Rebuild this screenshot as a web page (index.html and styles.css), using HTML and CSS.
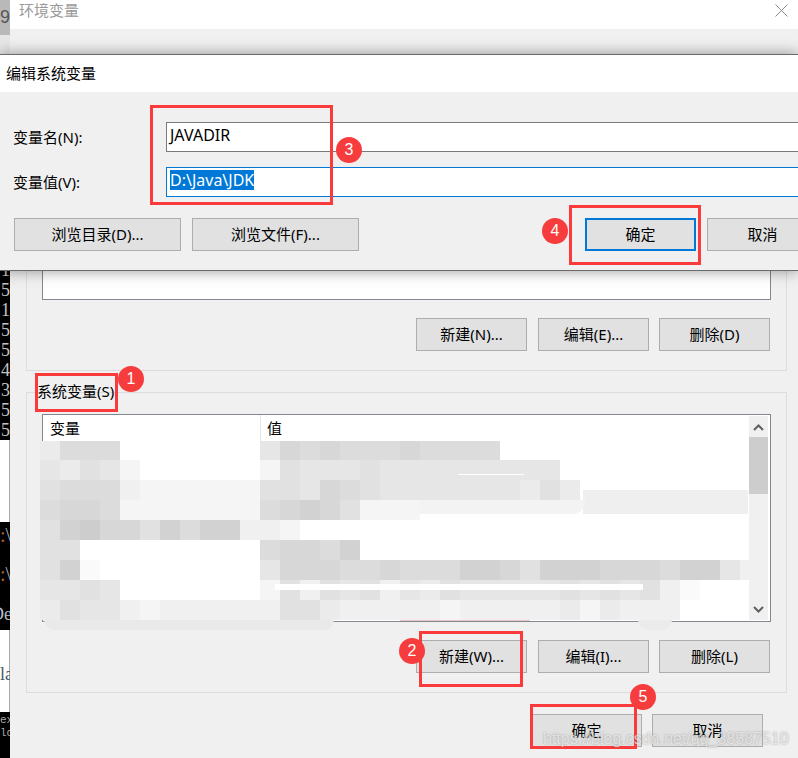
FILE: index.html
```html
<!DOCTYPE html>
<html lang="zh-CN">
<head>
  <meta charset="UTF-8" />
  <title>环境变量</title>
  <link rel="stylesheet" href="styles.css">
</head>
<body>
  <div class="desktop">
    <div class="console">
      <div class="con-top">9</div>
      <div class="con-gap"></div>
      <div class="con-digits">1<br>5<br>1<br>5<br>5<br>4<br>3<br>5<br>5</div>
      <div class="con-white"></div>
      <div class="con-paths">
        <div class="con-lines"><span class="orange">:</span>\<br><span class="orange">:</span>\<br><span class="cut">De</span></div>
      </div>
      <div class="con-la">la</div>
      <div class="con-small">ex<br>ld</div>
    </div>

    <div class="env-window">
      <div class="env-title">
        环境变量
        <svg class="close-icon" width="13" height="13" viewBox="0 0 13 13"><path d="M0.5 0.5L12.5 12.5M12.5 0.5L0.5 12.5" stroke="#8c8c8c" stroke-width="1" fill="none"/></svg>
      </div>
      <div class="env-body">
        <div class="group">
          <div class="list list-user"></div>
          <div class="btn-row">
            <div class="btn">新建(N)...</div>
            <div class="btn">编辑(E)...</div>
            <div class="btn">删除(D)</div>
          </div>
        </div>

        <div class="group group-sys">
          <span class="group-label">系统变量(S)</span>
          <div class="list list-sys">
            <div class="list-head">
              <div class="col-name">变量</div>
              <div class="col-value">值</div>
            </div>
            <div class="mosaic" id="mosaic">
              <div class="patch band-a"></div>
              <div class="patch band-b"></div>
              <div class="patch streak"></div>
              <div class="patch hairline"></div>
              <div class="patch smear"></div>
              <div class="patch smudge"></div>
              <div class="patch smudge-right"></div>
            </div>
            <div class="scrollbar">
              <svg class="arrow" width="19" height="21" viewBox="0 0 19 21"><path d="M5 14L9.5 9.5L14 14" stroke="#606060" stroke-width="2" fill="none"/></svg>
              <div class="thumb"></div>
              <div class="track"></div>
              <svg class="arrow" width="19" height="21" viewBox="0 0 19 21"><path d="M5 8L9.5 12.5L14 8" stroke="#606060" stroke-width="2" fill="none"/></svg>
            </div>
          </div>
          <div class="btn-row">
            <div class="btn">新建(W)...</div>
            <div class="btn">编辑(I)...</div>
            <div class="btn">删除(L)</div>
          </div>
        </div>

        <div class="env-actions">
          <div class="btn">确定</div>
          <div class="btn">取消</div>
        </div>
      </div>
    </div>

    <div class="edit-dialog">
      <div class="dialog-title">编辑系统变量</div>
      <div class="dialog-body">
        <div class="field">
          <label class="field-label">变量名(N):</label>
          <div class="field-input">JAVADIR</div>
        </div>
        <div class="field">
          <label class="field-label">变量值(V):</label>
          <div class="field-input is-focus"><span class="selected">D:\Java\JDK</span></div>
        </div>
        <div class="dialog-actions">
          <div class="btn btn-wide">浏览目录(D)...</div>
          <div class="btn btn-wide">浏览文件(F)...</div>
          <div class="btn is-default">确定</div>
          <div class="btn btn-cut">取消</div>
        </div>
      </div>
    </div>

    <div class="box box-1"></div>
    <div class="box box-2"></div>
    <div class="box box-3"></div>
    <div class="box box-4"></div>
    <div class="box box-5"></div>
    <div class="badge badge-1">1</div>
    <div class="badge badge-2">2</div>
    <div class="badge badge-3">3</div>
    <div class="badge badge-4">4</div>
    <div class="badge badge-5">5</div>

    <div class="watermark">https://blog.csdn.net/qq_38587510</div>
  </div>

  <script src="mosaic.js"></script>
</body>
</html>
```

FILE: styles.css
```css
body {
  margin: 0;
  font-family: "Noto Sans", "Noto Sans CJK SC", sans-serif;
  font-size: 15px;
  color: #000;
  background-color: #f0f0f0;
}

.desktop {
  position: relative;
  display: flex;
  width: 798px;
  height: 758px;
  overflow: hidden;
}

/* console window peeking out on the left */
.console {
  width: 10px;
  flex: none;
  overflow: hidden;
  font-family: "Liberation Serif", serif;
  white-space: nowrap;
}

.con-top {
  height: 35px;
  margin-left: -2px;
  padding-left: 2px;
  background-color: #b9b9b9;
  color: #555;
  font-family: "Liberation Sans", sans-serif;
  font-size: 18px;
  line-height: 34px;
}

.con-gap {
  height: 225px;
  background-color: #e6e6e6;
}

.con-digits {
  height: 180px;
  padding-left: 1px;
  background-color: #000;
  color: #c4c4c4;
  font-size: 18px;
  line-height: 20px;
}

.con-white {
  box-sizing: border-box;
  height: 82px;
  border-right: 1px solid #a9a9a9;
  background-color: #fff;
}

.con-paths {
  height: 108px;
  background-color: #000;
  color: #9db4ca;
  font-size: 20px;
  line-height: 39px;
  overflow: hidden;
}

.con-lines {
  margin-top: -6px;
}

.cut {
  display: inline-block;
  margin-left: -9px;
  font-size: 18px;
  color: #b4bcc4;
}

.orange {
  color: #b5601e;
}

.con-la {
  box-sizing: border-box;
  height: 82px;
  border-right: 1px solid #a9a9a9;
  background-color: #fff;
  color: #4a5a6a;
  font-size: 18px;
  line-height: 88px;
}

.con-small {
  height: 46px;
  background-color: #000;
  color: #a8a8a8;
  font-family: "Liberation Mono", monospace;
  font-size: 11px;
  line-height: 13px;
  padding-top: 2px;
}

/* environment variables window */
.env-window {
  flex: 1;
  min-width: 0;
  background-color: #f0f0f0;
}

.env-title {
  position: relative;
  height: 29px;
  padding-left: 9px;
  background-color: #fff;
  color: #9a9a9a;
  line-height: 20px;
}

.close-icon {
  position: absolute;
  right: 10px;
  top: 4px;
}

.env-body {
  padding: 31px 11px 0 16px;
}

.group {
  position: relative;
  padding: 19px 15px 19px;
  border: 1px solid #dcdcdc;
}

.group-sys {
  margin-top: 21px;
  padding-top: 21px;
}

.group-label {
  position: absolute;
  left: 10px;
  top: -12px;
  line-height: 20px;
}

.list {
  position: relative;
  box-sizing: border-box;
  display: flex;
  background-color: #fff;
  border: 1px solid #828790;
}

.list-user {
  height: 220px;
}

.list-sys {
  height: 208px;
}

.list-head {
  display: flex;
  flex: 1;
  height: 26px;
  line-height: 27px;
}

.col-name {
  width: 210px;
  padding-left: 7px;
  border-right: 1px solid #e5e5e5;
}

.col-value {
  padding-left: 6px;
}

.scrollbar {
  position: relative;
  z-index: 1;
  display: flex;
  flex-direction: column;
  width: 19px;
  margin: 1px 2px 1px 0;
  background-color: #f0f0f0;
}

.arrow {
  display: block;
  flex: none;
}

.thumb {
  height: 57px;
  background-color: #cdcdcd;
}

.track {
  flex: 1;
}

/* blurred-out table rows */
.mosaic {
  position: absolute;
  left: -3px;
  top: 26px;
  display: grid;
  grid-template-columns: repeat(36, 20px);
  grid-template-rows: 19px repeat(8, 20px);
}

.patch {
  position: absolute;
}

.band-a {
  left: 543px;
  top: 49px;
  width: 165px;
  height: 24px;
  background-color: #efefef;
}

.band-b {
  left: 380px;
  top: 59px;
  width: 165px;
  height: 14px;
  background-color: #f3f3f3;
  border-bottom-right-radius: 12px;
}

.streak {
  left: 235px;
  top: 143px;
  width: 368px;
  height: 6px;
  background-color: #fff;
}

.hairline {
  left: 418px;
  top: 33px;
  width: 66px;
  height: 1px;
  background-color: #fff;
}

.smear {
  left: 360px;
  top: 179px;
  width: 130px;
  height: 1px;
  background-color: #ecc9c9;
}

.smudge {
  left: 4px;
  top: 179px;
  width: 290px;
  height: 10px;
  background-color: #e9e9e9;
  border-radius: 0 0 40px 40px;
}

.smudge-right {
  left: 598px;
  top: 179px;
  width: 34px;
  height: 10px;
  background-color: #ebebeb;
  border-radius: 0 0 20px 20px;
}

.btn-row {
  display: flex;
  justify-content: flex-end;
  gap: 11px;
  margin-top: 18px;
  padding-right: 1px;
}

.btn-row .btn:last-child {
  margin-left: -1px;
}

.env-actions {
  display: flex;
  justify-content: flex-end;
  gap: 10px;
  margin-top: 21px;
  padding-right: 24px;
}

.btn {
  box-sizing: border-box;
  width: 111px;
  height: 33px;
  flex: none;
  border: 1px solid #adadad;
  background-color: #e1e1e1;
  text-align: center;
  line-height: 31px;
}

/* edit dialog on top */
.edit-dialog {
  position: absolute;
  left: 0;
  top: 54px;
  width: 798px;
  height: 217px;
  box-sizing: border-box;
  border-top: 1px solid #6b6b6b;
  border-bottom: 1px solid #6b6b6b;
  background-color: #f0f0f0;
  box-shadow: 0 0 14px rgba(0, 0, 0, 0.4);
  overflow: hidden;
}

.dialog-title {
  height: 37px;
  padding-left: 6px;
  background-color: #fff;
  line-height: 37px;
}

.dialog-body {
  display: flex;
  flex-direction: column;
  gap: 15px;
  padding: 30px 0 0 13px;
}

.field {
  display: flex;
  align-items: center;
}

.field-label {
  width: 153px;
  flex: none;
  line-height: 28px;
}

.field-input {
  box-sizing: border-box;
  width: 660px;
  height: 30px;
  flex: none;
  padding-left: 3px;
  border: 1px solid #7a7a7a;
  background-color: #fff;
  font-size: 16px;
  line-height: 24px;
}

.is-focus {
  border-color: #0078d7;
}

.selected {
  display: inline-block;
  height: 20px;
  margin-top: 2px;
  background-color: #0078d7;
  color: #fff;
  line-height: 20px;
  vertical-align: top;
}

.dialog-actions {
  display: flex;
  gap: 11px;
  margin: 6px 0 0 1px;
}

.btn-wide {
  width: 167px;
}

.is-default {
  margin-left: 215px;
  border: 2px solid #0078d7;
  line-height: 29px;
}

/* red annotations on the screenshot */
.box {
  position: absolute;
  box-sizing: border-box;
  border: 3px solid #fb3b3b;
}

.box-1 {
  left: 35px;
  top: 373px;
  width: 83px;
  height: 39px;
}

.box-2 {
  left: 419px;
  top: 631px;
  width: 104px;
  height: 56px;
}

.box-3 {
  left: 150px;
  top: 105px;
  width: 183px;
  height: 100px;
}

.box-4 {
  left: 569px;
  top: 205px;
  width: 132px;
  height: 60px;
}

.box-5 {
  left: 530px;
  top: 704px;
  width: 107px;
  height: 45px;
}

.badge {
  position: absolute;
  width: 26px;
  height: 26px;
  border-radius: 50%;
  background-color: #f63c3c;
  color: #fff;
  font-family: "Liberation Sans", sans-serif;
  font-size: 16px;
  line-height: 25px;
  text-align: center;
}

.badge-1 {
  left: 118px;
  top: 366px;
}

.badge-2 {
  left: 399px;
  top: 638px;
}

.badge-3 {
  left: 336px;
  top: 137px;
}

.badge-4 {
  left: 542px;
  top: 218px;
}

.badge-5 {
  left: 630px;
  top: 684px;
}

.watermark {
  position: absolute;
  left: 543px;
  top: 729px;
  font-family: "Liberation Sans", sans-serif;
  font-size: 16px;
  line-height: 20px;
  white-space: nowrap;
  color: rgba(255, 255, 255, 0.62);
  text-shadow: 0 0 2px rgba(120, 120, 120, 0.7);
}
```

FILE: mosaic.js
```js
// one character per 20px cell: "." is empty, a digit is a grey level
const rows = [
  "6333.......523233323333",
  "56458......845554555555555",
  "433378888884452345555555646",
  "3223888888832124888",
  "4102241311778",
  "44.........32231",
  "419........5222332333112411122231157",
  "5545.......8474547564555554545479",
  "64557877777744677777877777686777"
];

const mosaic = document.getElementById("mosaic");

rows.forEach(row => {
  row.padEnd(36, ".").split("").forEach(ch => {
    const cell = document.createElement("div");
    if (ch !== ".") {
      const grey = 205 + Number(ch) * 5;
      cell.style.backgroundColor = `rgb(${grey}, ${grey}, ${grey})`;
    }
    mosaic.appendChild(cell);
  });
});
```
